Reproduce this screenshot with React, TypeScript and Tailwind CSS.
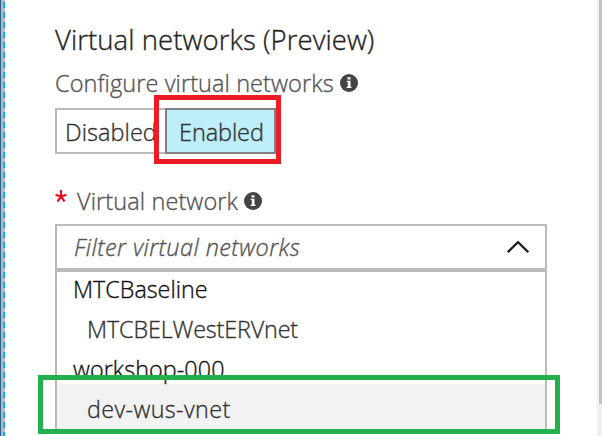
import React from "react";

function Info() {
  return (
    <svg className="h-[18px] w-[18px] shrink-0" viewBox="0 0 18 18">
      <circle cx="9" cy="9" r="9" fill="#444" />
      <path d="M7.5 3.2h3v2.3h-3zM6.8 6.8h3.7v6h1v1.2H6.6v-1.2h1.2V8h-1z" fill="#fff" />
    </svg>
  );
}

const options = [
  { name: "MTCBaseline", style: "pl-4 tracking-[0px] text-[#111]" },
  { name: "MTCBELWestERVnet", style: "pl-[30px] tracking-[-0.12px] text-[#333]" },
  { name: "workshop-000", style: "pl-4 tracking-[0.1px] text-[#111]" },
];

export default function App() {
  return (
    <div className="relative flex h-[436px] w-[602px] overflow-hidden bg-white font-['Open_Sans',sans-serif] font-light whitespace-nowrap [-webkit-text-stroke:0.35px_currentColor]">
      <div className="w-px shrink-0 bg-[#2c5c94]" />
      <div className="w-[2px] shrink-0 bg-[#b9b9bd]" />
      <div className="w-[2px] shrink-0 bg-[repeating-linear-gradient(180deg,#b9b9bd_0px,#b9b9bd_2px,#00b7ee_2px,#00b7ee_8px,#b9b9bd_8px,#b9b9bd_10px)]" />
      <main className="ml-[50px] w-[492px] shrink-0">
        <h1 className="mt-[22px] h-9 text-[27.5px] font-light leading-9 tracking-[0.08px] text-[#222]"><span>Virtual networks (Preview)</span></h1>
        <div className="mt-[9px] flex h-8 items-center text-[23.5px] leading-8 tracking-[0.08px] text-[#555]">
          <span>Configure virtual networks</span>
          <span className="ml-1.5"><Info /></span>
        </div>
        <div className="mt-[9px] flex h-[46px] text-[23.5px] leading-[44px] text-[#333]">
          <div className="w-[110px] border-y-2 border-l-2 border-[#bbb] pl-2 tracking-[0.05px]"><span>Disabled</span></div>
          <div className="w-[111px] border-2 border-[#808080] bg-[#bdeefa] pl-3 tracking-[-0.1px]"><span>Enabled</span></div>
        </div>
        <div className="mt-[31px] flex h-8 items-center text-[23.5px] leading-8 tracking-[0.1px] text-[#555]">
          <svg className="mr-[10px] mb-2.5 h-3 w-3" viewBox="0 0 12 12">
            <path d="M6 6.5V0M6 6.5L0.5 4.7M6 6.5L11.5 4.7M6 6.5L2.5 11.5M6 6.5L9.5 11.5" stroke="#e81123" strokeWidth="2.2" />
          </svg>
          <span>Virtual network</span>
          <span className="ml-1.5"><Info /></span>
        </div>
        <div className="mt-[7px] flex h-[46px] items-center justify-between border-2 border-[#bbb] pr-4 pl-[17px] text-[23.5px] tracking-[0.4px] text-[#555] italic">
          <span className="pt-0.5">Filter virtual networks</span>
          <svg className="h-3 w-[22px]" viewBox="0 0 22 12" fill="none"><path d="M0.7 11.2L11 1.1L21.3 11.2" stroke="#222" strokeWidth="2.3" /></svg>
        </div>
        <div className="h-[164px] border-2 border-b-0 border-[#bbb] text-[23.3px]">
          {options.map((o) => (
            <div key={o.name} className="h-10 leading-[34px]">
              <div className={o.style}><span>{o.name}</span></div>
            </div>
          ))}
          <div className="-mt-2 h-[50px] bg-[#f2f2f2] pl-[30px] leading-[50px] tracking-[0.4px] text-[#333]"><span>dev-wus-vnet</span></div>
        </div>
      </main>
      <div className="ml-auto flex w-[5px] bg-[#f0f0f0] pl-0.5">
        <div className="h-[404px] w-[3px] bg-[#c1c1c1]" />
      </div>
      <div className="absolute top-[95px] left-[154px] h-[69px] w-[127px] border-5 border-[#ed1c24]" />
      <div className="absolute top-[375px] left-[38px] h-[59px] w-[522px] border-5 border-[#22b14c]" />
    </div>
  );
}
